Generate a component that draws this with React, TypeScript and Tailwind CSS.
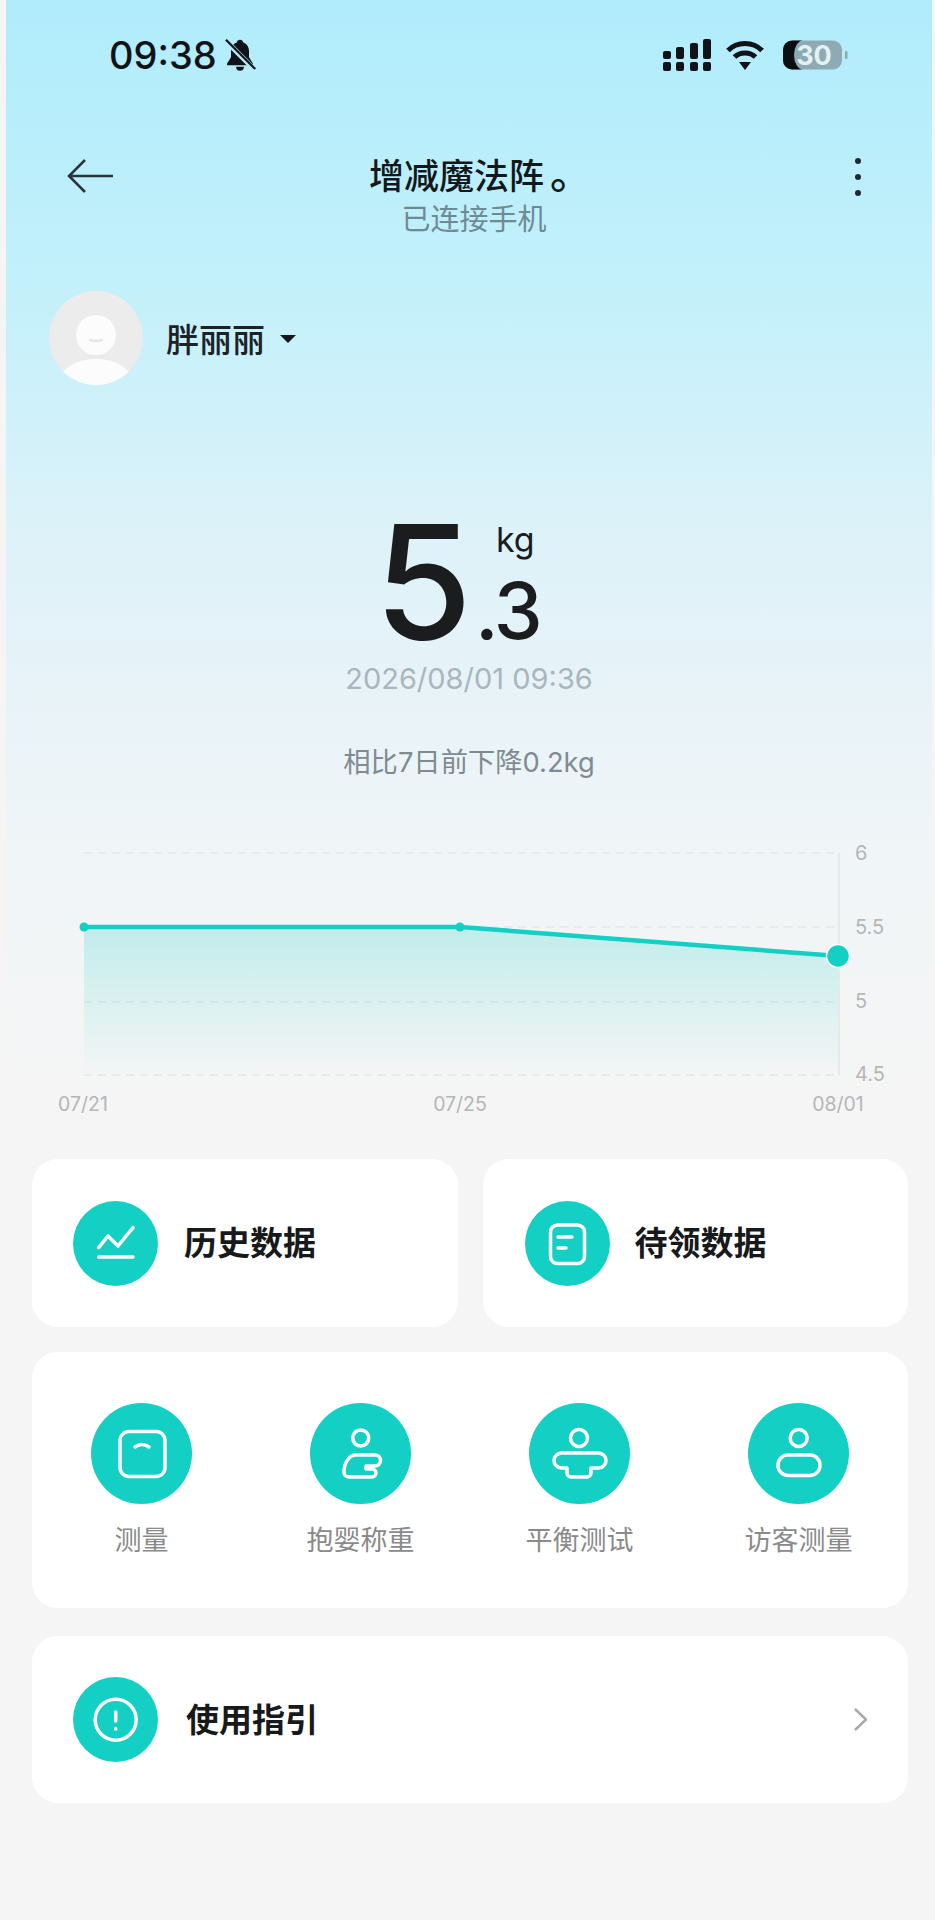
const Disc = ({ size, children }: { size: 85 | 101; children: React.ReactNode }) => (
  <svg
    viewBox={`0 0 ${size} ${size}`}
    className={size === 85 ? "w-[85px] h-[85px] shrink-0" : "w-[101px] h-[101px] shrink-0"}
    fill="none"
    stroke="#fff"
    strokeLinecap="round"
    strokeLinejoin="round"
  >
    <circle cx={size / 2} cy={size / 2} r={size / 2} fill="#13cfc4" stroke="none" />
    {children}
  </svg>
);

const tools = [
  {
    label: "测量",
    icon: (
      <g strokeWidth="3.5">
        <rect x="29" y="28.5" width="45" height="45" rx="9" />
        <path d="M44 44q7-5 14 0" />
      </g>
    ),
  },
  {
    label: "抱婴称重",
    icon: (
      <g strokeWidth="3.5">
        <circle cx="50.7" cy="35" r="8" />
        <path d="M39 74H62a4 4 0 0 0 0-8H56V63H65a5.5 5.5 0 0 0 0-11H46C39 52 34 60 34 69a5 5 0 0 0 5 5z" />
      </g>
    ),
  },
  {
    label: "平衡测试",
    icon: (
      <g strokeWidth="3.5">
        <circle cx="50" cy="35" r="8.5" />
        <path d="M32.5 50H69.5a7.5 7.5 0 0 1 0 15H62V70a4 4 0 0 1-4 4H42a4 4 0 0 1-4-4V65H32.5a7.5 7.5 0 0 1 0-15z" />
      </g>
    ),
  },
  {
    label: "访客测量",
    icon: (
      <g strokeWidth="3.5">
        <circle cx="50.7" cy="35" r="8.5" />
        <rect x="30" y="52" width="42" height="20.5" rx="10" />
      </g>
    ),
  },
];

const StatusBar = () => (
  <div className="flex items-center justify-between h-[42px] mt-[34px] pl-[103px] pr-[84px]">
    <div className="flex items-center gap-[5px]">
      <span className="text-[38px] leading-[42px] font-medium text-[#101418]">09:38</span>
      <svg viewBox="0 0 32 32" className="w-[36px] h-[36px]" fill="#101418">
        <path d="M16 2.500c-1.600 0-2.600 1-2.800 2.400C9.800 6 8 9 8 12.500v5.500L4.500 23.500v1.500h23v-1.500L24 18v-5.500C24 9 22.200 6 18.800 4.900 18.600 3.500 17.600 2.500 16 2.500z" />
        <path d="M12.500 26.500h7a3.500 3.500 0 0 1-7 0z" />
        <path d="M3 3l26 26" stroke="#b3edfc" strokeWidth="4.500" />
        <path d="M3.500 2.500l26 26" stroke="#101418" strokeWidth="2" />
      </svg>
    </div>
    <div className="flex items-center">
      <svg viewBox="0 0 48 32" className="w-[48px] h-[32px]" fill="#101418">
        <rect x="0" y="12" width="8" height="8" rx="2" />
        <rect x="13" y="8" width="8" height="12" rx="2" />
        <rect x="27" y="4" width="8" height="16" rx="2" />
        <rect x="40" y="0" width="8" height="20" rx="2" />
        <rect x="0" y="23" width="8" height="9" rx="2" />
        <rect x="13" y="23" width="8" height="9" rx="2" />
        <rect x="27" y="23" width="8" height="9" rx="2" />
        <rect x="40" y="23" width="8" height="9" rx="2" />
      </svg>
      <svg viewBox="0 0 38 30" className="w-[38px] h-[30px] ml-[15px]" fill="none" stroke="#101418" strokeWidth="5">
        <path d="M2 10.500C11 1 27 1 36 10.500" />
        <path d="M8.500 17C14 11.500 24 11.500 29.500 17" />
        <path d="M13 22h12l-6 8z" fill="#101418" stroke="none" />
      </svg>
      <svg viewBox="0 0 65 30" className="w-[65px] h-[30px] ml-[19px]">
        <rect x="0" y="0.500" width="59" height="29" rx="9" fill="#8eabb3" />
        <path d="M9 .5H20a9 14.500 0 0 0 0 29H9a9 9 0 0 1-9-9v-11a9 9 0 0 1 9-9z" fill="#0c0f12" />
        <text x="31" y="24.500" textAnchor="middle" fontSize="27" fontWeight="700" fill="#e3f1f4">
          30
        </text>
        <rect x="62" y="11" width="2.500" height="8" rx="1" fill="#8eabb3" />
      </svg>
    </div>
  </div>
);

const Chart = () => (
  <svg viewBox="6 840 926 280" className="block w-full h-[280px] mt-[58px]">
    <defs>
      <linearGradient id="area" x1="0" y1="0" x2="0" y2="1">
        <stop offset="0" stopColor="#13cfc4" stopOpacity="0.22" />
        <stop offset="1" stopColor="#13cfc4" stopOpacity="0" />
      </linearGradient>
    </defs>
    {[852, 926, 1001, 1074].map((y) => (
      <line key={y} x1="84" x2="839" y1={y} y2={y} stroke="#e4e7e8" strokeWidth="1.500" strokeDasharray="8 6" />
    ))}
    <line x1="839" x2="839" y1="852" y2="1074" stroke="#e0e4e5" strokeWidth="1.500" />
    <path d="M84 926H460L838 955V1074H84z" fill="url(#area)" />
    <path d="M84 926H460L838 955" fill="none" stroke="#13cfc4" strokeWidth="4.500" />
    <circle cx="84" cy="926" r="4.500" fill="#13cfc4" />
    <circle cx="460" cy="926" r="4.500" fill="#13cfc4" />
    <circle cx="838" cy="955" r="11.500" fill="#13cfc4" stroke="#fff" strokeWidth="1.500" />
    <g fontSize="20" fill="#b4b6b7">
      <text x="855" y="859">6</text>
      <text x="855" y="933">5.5</text>
      <text x="855" y="1007">5</text>
      <text x="855" y="1080">4.5</text>
    </g>
    <g fontSize="19.500" fill="#b4b6b7" textAnchor="middle">
      <text x="83" y="1110">07/21</text>
      <text x="460" y="1110">07/25</text>
      <text x="838" y="1110">08/01</text>
    </g>
  </svg>
);

export default function App() {
  return (
    <div className="min-h-[1920px] pl-[6px] pr-[3px] overflow-hidden bg-[#f5f5f5] font-[Inter,'Noto_Sans_CJK_SC',sans-serif]">
      <div className="h-[1122px] flow-root bg-[linear-gradient(180deg,#b1ecfc_0px,#c0f0fb_250px,#cef1fa_400px,#dcf2f9_520px,#e8f3f8_700px,#f0f5f7_850px,#f5f5f5_1100px)]">
        <StatusBar />

        {/* title row */}
        <div className="grid grid-cols-[1fr_auto_1fr] mt-[79px] ml-[62px] mr-[52px]">
          <svg viewBox="0 0 46 34" className="w-[46px] h-[34px] mt-[4px] -ml-[1px]" fill="none" stroke="#2b3338" strokeWidth="2.500">
            <path d="M46 17H2M18 1L2 17l16 16" />
          </svg>
          <div className="flex flex-col items-center">
            <div className="h-[42px] whitespace-nowrap text-[35px] leading-[42px] font-medium text-[#14181b]">
              增减魔法阵<span className="ml-[6px] -mr-[13px] text-[42px] leading-[0]">。</span>
            </div>
            <div className="h-[46px] text-[29px] leading-[46px] text-[#6f8a94]">已连接手机</div>
          </div>
          <div className="flex justify-end pr-[18px] pt-[2px]">
            <svg viewBox="0 0 8 40" className="w-[8px] h-[40px]" fill="#22292d">
              <circle cx="4" cy="4" r="3" />
              <circle cx="4" cy="20" r="3" />
              <circle cx="4" cy="36" r="3" />
            </svg>
          </div>
        </div>

        {/* user */}
        <div className="flex items-center mt-[48px] ml-[43px]">
          <svg viewBox="0 0 94 94" className="w-[94px] h-[94px]">
            <defs>
              <clipPath id="face">
                <circle cx="47" cy="47" r="47" />
              </clipPath>
            </defs>
            <circle cx="47" cy="47" r="47" fill="#ececec" />
            <g clipPath="url(#face)" fill="#fcfcfc">
              <circle cx="47" cy="44" r="20" />
              <ellipse cx="47" cy="92" rx="37" ry="24" />
            </g>
            <path d="M41 49q6 2 12 0" fill="none" stroke="#e6e6e6" strokeWidth="2.500" strokeLinecap="round" />
          </svg>
          <span className="ml-[23px] mt-[3px] text-[33px] leading-[40px] font-medium text-[#1c2327]">胖丽丽</span>
          <svg viewBox="0 0 16 8" className="w-[16px] h-[8px] ml-[15px] mt-[2px]" fill="#14181b">
            <path d="M0 0h16L8 8z" />
          </svg>
        </div>

        {/* current weight */}
        <div className="flex justify-center items-start mt-[139px] pr-[24px] text-[#1a1c1e]">
          <span className="h-[115px] text-[158px] leading-[115px] font-[540]">5</span>
          <div className="flex flex-col items-end ml-[3px]">
            <span className="h-[25px] mt-[3px] mr-[5px] text-[34px] leading-[25px]">kg</span>
            <span className="h-[57px] mt-[30px] text-[78px] leading-[57px] font-medium tracking-[-3px]">.3</span>
          </div>
        </div>
        <div className="h-[40px] mt-[20px] text-center text-[29px] leading-[40px] text-[#aab6bc]">2026/08/01 09:36</div>
        <div className="h-[40px] mt-[44px] text-center text-[27.3px] leading-[40px] text-[#7f8b91]">相比7日前下降0.2kg</div>

        <Chart />
      </div>

      {/* cards */}
      <div className="flex flex-col mt-[37px] pl-[26px] pr-[24px]">
        <div className="grid grid-cols-2 gap-[25px]">
          <div className="flex items-center h-[168px] pl-[41px] rounded-[26px] bg-white">
            <Disc size={85}>
              <g strokeWidth="3.500">
                <path d="M25.700 46.700L35 35l10 10 15-18.300" />
                <path d="M25.700 56H60" />
              </g>
            </Disc>
            <span className="ml-[26px] text-[33px] leading-[40px] font-semibold text-[#17191b]">历史数据</span>
          </div>
          <div className="flex items-center h-[168px] pl-[42px] rounded-[26px] bg-white">
            <Disc size={85}>
              <g strokeWidth="3.500">
                <rect x="25.500" y="24" width="34" height="38.500" rx="7" />
                <path d="M33 36h14M33 47h8" />
              </g>
            </Disc>
            <span className="ml-[25px] text-[33px] leading-[40px] font-semibold text-[#17191b]">待领数据</span>
          </div>
        </div>

        <div className="grid grid-cols-4 h-[256px] mt-[25px] pt-[51px] rounded-[26px] bg-white">
          {tools.map((tool) => (
            <div key={tool.label} className="flex flex-col items-center">
              <Disc size={101}>{tool.icon}</Disc>
              <span className="mt-[17px] text-[27px] leading-[40px] text-[#8a8a8a]">{tool.label}</span>
            </div>
          ))}
        </div>

        <div className="flex items-center h-[167px] mt-[28px] pl-[41px] pr-[41px] rounded-[26px] bg-white">
          <Disc size={85}>
            <circle cx="42.700" cy="42.700" r="20.500" strokeWidth="3.500" />
            <path d="M42.700 35v9" strokeWidth="3.500" />
            <path d="M42.700 51.500v.5" strokeWidth="3.500" />
          </Disc>
          <span className="ml-[28px] text-[33px] leading-[40px] font-semibold text-[#17191b]">使用指引</span>
          <svg viewBox="0 0 13 23" className="w-[13px] h-[23px] ml-auto" fill="none" stroke="#a9a9a9" strokeWidth="2.500">
            <path d="M1 1l11 10.500L1 22" />
          </svg>
        </div>
      </div>
    </div>
  );
}
